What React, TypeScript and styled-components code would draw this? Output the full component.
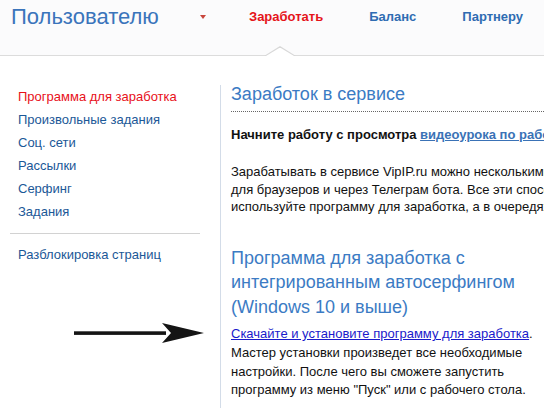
import styled, {createGlobalStyle} from "styled-components";

const GlobalStyle = createGlobalStyle`
  html, body {
    margin: 0;
    padding: 0;
    background: #fff;
  }
  body {
    font-family: "Liberation Sans", Arial, sans-serif;
    width: 544px;
    height: 408px;
    overflow: hidden;
  }
`

const Page = styled.div`
  position: relative;
  width: 544px;
  height: 408px;
  overflow: hidden;
`
const Header = styled.header`
  position: relative;
  height: 56px;
  box-sizing: border-box;
  display: flex;
  align-items: flex-start;
  padding: 5px 0 0 11px;
  background: #fbfbfc;
  border-bottom: 1px solid #dcdcdc;
`
const Title = styled.div`
  width: 189px;
  font-size: 22px;
  line-height: 24px;
  color: #3a74bb;
`
const Caret = styled.span`
  margin-top: 10px;
  width: 0;
  height: 0;
  border-left: 3.5px solid transparent;
  border-right: 3.5px solid transparent;
  border-top: 4px solid #c8463c;
`
const Nav = styled.nav`
  display: flex;
  gap: 46px;
  margin-left: 43px;
`
const NavItem = styled.a<{ $active?: boolean }>`
  font-size: 13px;
  line-height: 24px;
  font-weight: bold;
  text-decoration: none;
  color: ${p => p.$active ? "#e5141b" : "#2f6cb2"};
`
const Notch = styled.span`
  position: absolute;
  left: 264px;
  bottom: -1px;
  width: 32px;
  height: 10px;

  &::before, &::after {
    content: "";
    position: absolute;
    bottom: 0;
    clip-path: polygon(0 100%, 50% 0, 100% 100%);
  }
  &::before {
    left: 0;
    width: 32px;
    height: 10px;
    background: #d8d8d8;
  }
  &::after {
    left: 2px;
    width: 28px;
    height: 8.5px;
    background: #fff;
  }
`
const Main = styled.div`
  display: flex;
  padding-top: 29px;
`
const Sidebar = styled.aside`
  width: 220px;
  flex-shrink: 0;
  box-sizing: border-box;
  padding: 0 20px 0 10px;
`
const SideList = styled.ul`
  list-style: none;
  margin: 0;
  padding: 0 0 0 8px;
`
const SideLink = styled.li<{ $active?: boolean }>`
  font-size: 13px;
  line-height: 23px;
  color: ${p => p.$active ? "#e8101a" : "#1b5897"};
`
const Separator = styled.hr`
  border: none;
  border-top: 1px solid #d2d2d2;
  margin: 10px 0 9px;
`
const Content = styled.main`
  flex: 1;
  min-width: 0;
  border-left: 1px solid #d3dce8;
  padding-left: 10px;
  height: 330px;
`
const SectionTitle = styled.h2`
  margin: 0 -400px 0 0;
  font-weight: normal;
  font-size: 18px;
  line-height: 18px;
  color: #3b7bc4;
  padding-bottom: 8px;
  border-bottom: 1px dotted #666;
`
const Lead = styled.p`
  margin: 14px 0 0;
  font-size: 13px;
  line-height: 18px;
  font-weight: bold;
  color: #111;
  white-space: nowrap;
`
const LeadLink = styled.a`
  color: #3a72b6;
  text-decoration: underline;
`
const Intro = styled.p`
  margin: 19px 0 0;
  font-size: 13px;
  line-height: 17.5px;
  color: #111;
`
const Line = styled.span`
  display: block;
  white-space: nowrap;
`
const BigTitle = styled.h2`
  margin: 30px 0 0;
  font-weight: normal;
  font-size: 18px;
  line-height: 24.5px;
  color: #3b7bc4;
`
const Body = styled.p`
  margin: 6px 0 0;
  font-size: 13px;
  line-height: 18.8px;
  color: #111;
`
const DownloadLink = styled.a`
  color: #1a1acb;
  text-decoration: underline;
`
const Arrow = styled.svg`
  position: absolute;
  left: 70px;
  top: 320px;
`

export default function App() {
    return (
        <Page>
            <GlobalStyle/>
            <Header>
                <Title>Пользователю</Title>
                <Caret/>
                <Nav>
                    <NavItem $active>Заработать</NavItem>
                    <NavItem>Баланс</NavItem>
                    <NavItem>Партнеру</NavItem>
                </Nav>
                <Notch/>
            </Header>
            <Main>
                <Sidebar>
                    <SideList>
                        <SideLink $active>Программа для заработка</SideLink>
                        <SideLink>Произвольные задания</SideLink>
                        <SideLink>Соц. сети</SideLink>
                        <SideLink>Рассылки</SideLink>
                        <SideLink>Серфинг</SideLink>
                        <SideLink>Задания</SideLink>
                    </SideList>
                    <Separator/>
                    <SideList>
                        <SideLink>Разблокировка страниц</SideLink>
                    </SideList>
                </Sidebar>
                <Content>
                    <SectionTitle>Заработок в сервисе</SectionTitle>
                    <Lead>
                        Начните работу с просмотра <LeadLink>видеоурока по работе с сервисом</LeadLink>
                    </Lead>
                    <Intro>
                        <Line>Зарабатывать в сервисе VipIP.ru можно несколькими способами: через программу, расширения</Line>
                        <Line>для браузеров и через Телеграм бота. Все эти способы можно совмещать. В первую очередь</Line>
                        <Line>используйте программу для заработка, а в очередях заданий выбирайте подходящие.</Line>
                    </Intro>
                    <BigTitle>Программа для заработка с интегрированным автосерфингом (Windows 10 и выше)</BigTitle>
                    <Body>
                        <DownloadLink>Скачайте и установите программу для заработка</DownloadLink>.
                        Мастер установки произведет все необходимые настройки. После чего вы сможете запустить
                        программу из меню "Пуск" или с рабочего стола.
                    </Body>
                </Content>
            </Main>
            <Arrow width="140" height="26" viewBox="0 0 140 26">
                <rect x="4" y="11.3" width="92" height="3.6" fill="#141414"/>
                <path d="M92 3 L134 13 L92 23 L101 13 Z" fill="#141414"/>
            </Arrow>
        </Page>
    )
}
